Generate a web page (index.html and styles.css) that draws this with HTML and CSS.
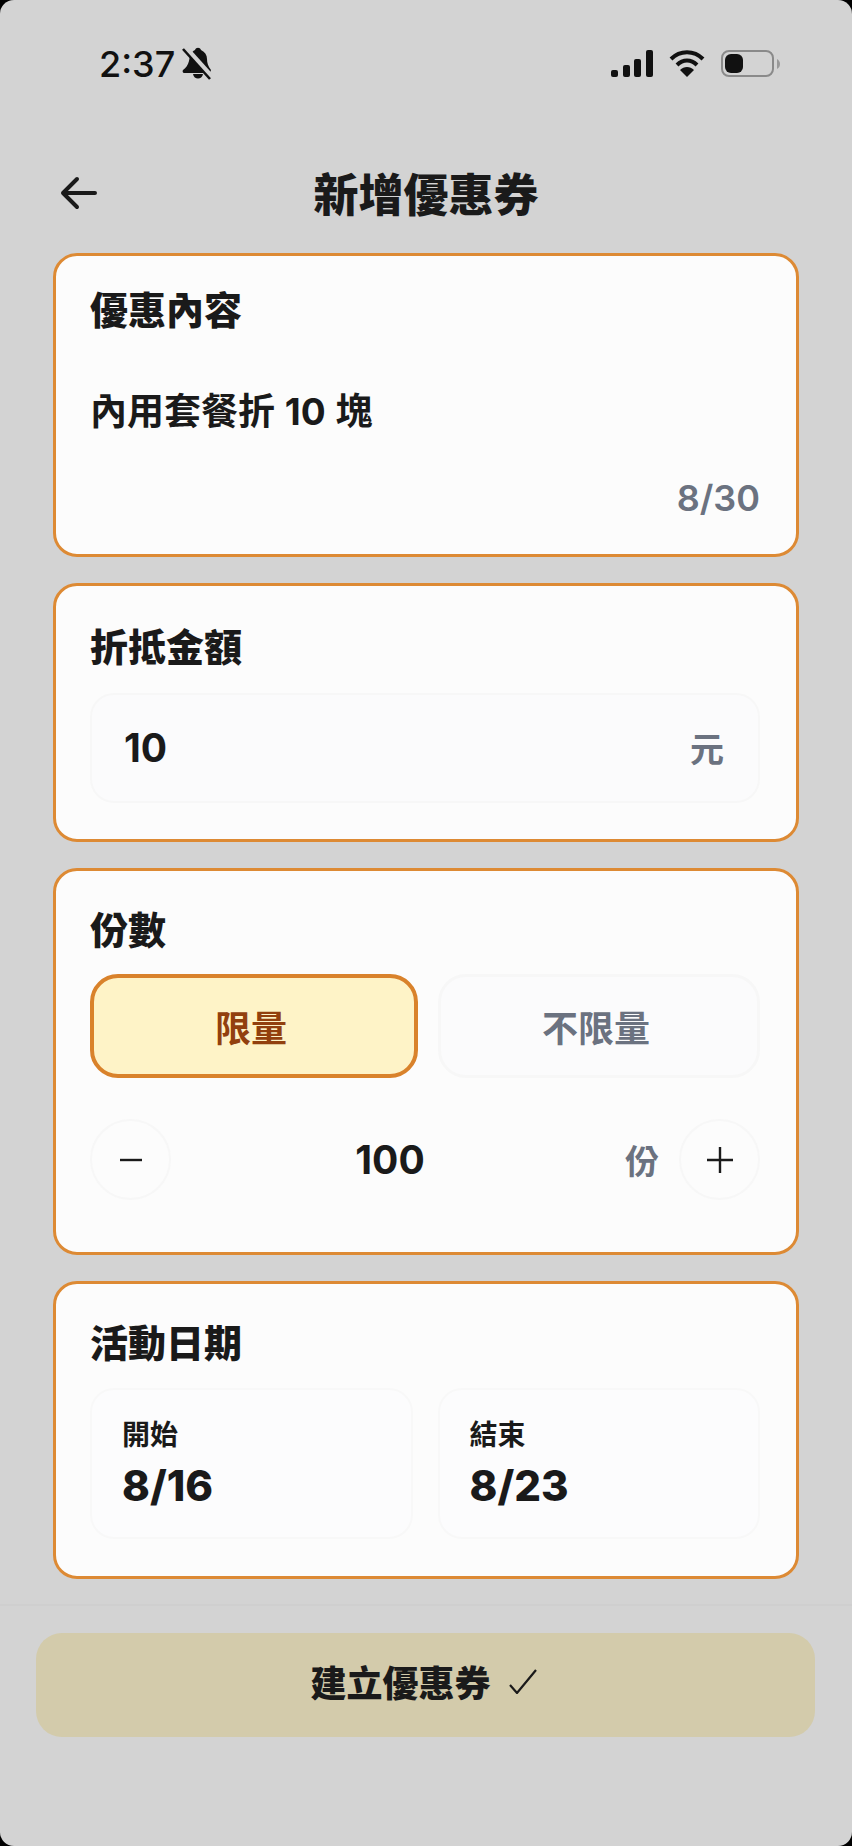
FILE: index.html
```html
<!DOCTYPE html>
<html lang="zh-Hant">
<head>
    <meta charset="UTF-8">
    <meta name="viewport" content="width=device-width, initial-scale=1.0">
    <title>新增優惠券</title>
    <link rel="stylesheet" href="styles.css">
</head>
<body>
    <div class="screen">
        <div class="status-bar">
            <div class="status-left">
                <span class="time">2:37</span>
                <svg class="bell" width="30" height="33" viewBox="0 0 30 33">
                    <path d="M13 3c1-3 5-3 6 0 4 2 6 5 6 9 0 4 1 7 4 11l-1 3H2c-1 0-2-2-1-3 3-2 5-5 6-9 1-5 2-9 6-11z" fill="#111"/>
                    <path d="M11 27h10c-1 6-9 6-10 0z" fill="#111"/>
                    <path d="M3 0l27 30" stroke="#d2d2d2" stroke-width="5"/>
                    <path d="M1 2l27 30" stroke="#111" stroke-width="2.600"/>
                </svg>
            </div>
            <div class="status-right">
                <svg width="42" height="27" viewBox="0 0 42 27">
                    <rect x="0" y="20" width="7" height="7" rx="2" fill="#111"/>
                    <rect x="12" y="15" width="7" height="12" rx="2" fill="#111"/>
                    <rect x="23" y="9" width="7" height="18" rx="2" fill="#111"/>
                    <rect x="35" y="0" width="7" height="27" rx="2" fill="#111"/>
                </svg>
                <svg width="36" height="27" viewBox="0 0 36 27">
                    <path d="M2 9c9-9 23-9 32 0" fill="none" stroke="#111" stroke-width="4"/>
                    <path d="M8 15c6-6 14-6 20 0" fill="none" stroke="#111" stroke-width="4"/>
                    <path d="M11 20c4-4 10-4 14 0l-7 7z" fill="#111"/>
                </svg>
                <svg width="59" height="27" viewBox="0 0 59 27">
                    <rect x="1" y="1" width="51" height="25" rx="7" fill="none" stroke="#8a8a8a" stroke-width="2"/>
                    <rect x="4" y="4" width="18" height="19" rx="6" fill="#111"/>
                    <path d="M56 9c2 1 3 3 3 5s-1 4-3 5z" fill="#999"/>
                </svg>
            </div>
        </div>

        <header class="page-header">
            <svg class="back" width="38" height="34" viewBox="0 0 38 34">
                <path d="M35 17H3M17 3L3 17 17 31" fill="none" stroke="#1a1a1a" stroke-width="4" stroke-linecap="round" stroke-linejoin="round"/>
            </svg>
            <h1>新增優惠券</h1>
        </header>

        <main class="cards">
            <section class="card card-content">
                <h2>優惠內容</h2>
                <p class="content-text">內用套餐折 10 塊</p>
                <div class="counter">8/30</div>
            </section>

            <section class="card card-amount">
                <h2>折抵金額</h2>
                <div class="amount-box">
                    <span class="amount">10</span>
                    <span class="unit">元</span>
                </div>
            </section>

            <section class="card card-qty">
                <h2>份數</h2>
                <div class="toggle">
                    <button class="toggle-btn active">限量</button>
                    <button class="toggle-btn">不限量</button>
                </div>
                <div class="stepper">
                    <button class="step">
                        <svg width="24" height="24" viewBox="0 0 24 24"><path d="M1 12h22" stroke="#1a1a1a" stroke-width="2.400"/></svg>
                    </button>
                    <span class="qty">100</span>
                    <span class="unit qty-unit">份</span>
                    <button class="step">
                        <svg width="26" height="26" viewBox="0 0 26 26"><path d="M0 13h26M13 0v26" stroke="#1a1a1a" stroke-width="2.400"/></svg>
                    </button>
                </div>
            </section>

            <section class="card card-date">
                <h2>活動日期</h2>
                <div class="dates">
                    <div class="date-box">
                        <span class="date-label">開始</span>
                        <span class="date-value">8/16</span>
                    </div>
                    <div class="date-box">
                        <span class="date-label">結束</span>
                        <span class="date-value">8/23</span>
                    </div>
                </div>
            </section>
        </main>

        <footer class="bottom-bar">
            <button class="submit">
                建立優惠券
                <svg width="28" height="25" viewBox="0 0 28 25"><path d="M1 16l7 8L27 1" fill="none" stroke="#1a1a1a" stroke-width="2.200"/></svg>
            </button>
        </footer>
    </div>
</body>
</html>
```

FILE: styles.css
```css
* {
    box-sizing: border-box;
}

html, body {
    margin: 0;
    padding: 0;
    background: #000;
}

body {
    font-family: Inter, "Noto Sans CJK TC", sans-serif;
    color: #1a1a1a;
}

.screen {
    width: 852px;
    height: 1846px;
    background: #d3d3d3;
    border-radius: 14px;
    overflow: hidden;
}

.status-bar {
    display: flex;
    justify-content: space-between;
    align-items: center;
    height: 127px;
    padding: 0 72px 0 99px;
}

.status-left {
    display: flex;
    align-items: center;
    gap: 7px;
}

.time {
    font-size: 36px;
    font-weight: 500;
    line-height: 40px;
    color: #111;
}

.status-right {
    display: flex;
    align-items: center;
    gap: 16px;
}

.page-header {
    position: relative;
    display: flex;
    justify-content: center;
    align-items: center;
    height: 126px;
    padding-top: 12px;
}

.back {
    position: absolute;
    left: 60px;
    top: 49px;
}

h1 {
    margin: 0;
    font-size: 45px;
    font-weight: 900;
    line-height: 60px;
}

.cards {
    display: flex;
    flex-direction: column;
    gap: 26px;
    padding: 0 53px;
}

.card {
    background: #fcfcfc;
    border: 3px solid #dd8a34;
    border-radius: 24px;
    padding: 0 36px 0 34px;
}

h2 {
    margin: 0;
    font-size: 38px;
    font-weight: 900;
    line-height: 50px;
}

.card-content {
    height: 304px;
    padding-top: 29px;
}

.content-text {
    margin: 52px 0 0;
    font-size: 37px;
    font-weight: 700;
    line-height: 50px;
    word-spacing: 1px;
}

.counter {
    margin-top: 39px;
    text-align: right;
    font-size: 36px;
    font-weight: 600;
    line-height: 44px;
    color: #6b7280;
}

.card-amount {
    height: 259px;
    padding-top: 36px;
}

.amount-box {
    display: flex;
    justify-content: space-between;
    align-items: center;
    height: 110px;
    margin-top: 21px;
    padding: 0 34px 2px 32px;
    background: #fbfbfc;
    border: 2px solid #f7f7f7;
    border-radius: 24px;
}

.amount {
    font-size: 39px;
    font-weight: 700;
}

.unit {
    font-size: 34px;
    font-weight: 700;
    color: #6b7280;
}

.card-qty {
    height: 387px;
    padding-top: 34px;
}

.toggle {
    display: flex;
    gap: 20px;
    margin-top: 19px;
}

.toggle-btn {
    flex: 1;
    height: 104px;
    padding: 0 6px 0 0;
    font-family: inherit;
    font-size: 36px;
    font-weight: 700;
    color: #6b7280;
    background: #fbfbfc;
    border: 3px solid #f7f7f7;
    border-radius: 28px;
}

.toggle-btn.active {
    flex: 0 0 328px;
    color: #92400e;
    background: #fef3c7;
    border: 4px solid #d9822b;
}

.stepper {
    display: flex;
    align-items: center;
    margin-top: 41px;
}

.step {
    display: flex;
    justify-content: center;
    align-items: center;
    flex: none;
    width: 81px;
    height: 81px;
    padding: 0;
    background: #fcfcfc;
    border: 2px solid #f7f7f7;
    border-radius: 50%;
}

.qty {
    flex: 1;
    padding-right: 16px;
    text-align: center;
    font-size: 39px;
    font-weight: 700;
}

.qty-unit {
    margin-right: 20px;
}

.card-date {
    height: 298px;
    padding-top: 34px;
}

.dates {
    display: flex;
    gap: 25px;
    margin-top: 20px;
}

.date-box {
    display: flex;
    flex-direction: column;
    flex: 1;
    height: 151px;
    padding: 25px 30px 0;
    background: #fcfcfd;
    border: 2px solid #f8f8f8;
    border-radius: 24px;
}

.date-label {
    font-size: 28px;
    font-weight: 700;
    line-height: 40px;
}

.date-value {
    margin-top: 6px;
    font-size: 42px;
    font-weight: 800;
    line-height: 50px;
}

.bottom-bar {
    height: 269px;
    margin-top: 25px;
    padding: 27px 37px 0 36px;
    border-top: 2px solid #cfcfcf;
}

.submit {
    display: flex;
    justify-content: center;
    align-items: center;
    gap: 18px;
    width: 100%;
    height: 104px;
    padding: 0 4px 8px 0;
    font-family: inherit;
    font-size: 36px;
    font-weight: 900;
    color: #1a1a1a;
    background: #d3cbab;
    border: none;
    border-radius: 26px;
}
```
